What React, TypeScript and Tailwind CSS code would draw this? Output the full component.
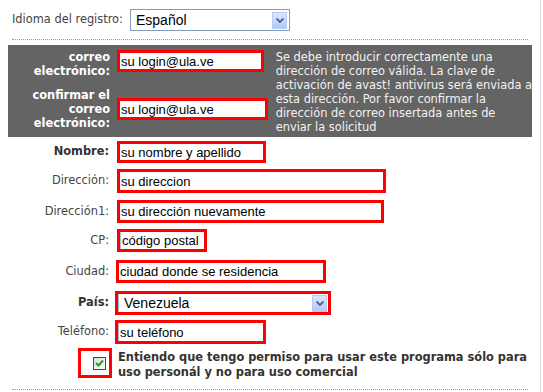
import type { ReactNode } from "react";

// Formulario de registro (captura a 543x392)

function Chevron() {
  return (
    <span className="flex h-[17px] w-[15px] items-center justify-center border border-[#b8cbf5] bg-gradient-to-b from-[#dbe6fd] to-[#b6c9f6]">
      <svg width="8" height="5" viewBox="0 0 8 5" aria-hidden>
        <path d="M0.5 0.5 L4 4 L7.5 0.5" fill="none" stroke="#4d6185" strokeWidth="1.8" />
      </svg>
    </span>
  );
}

function Field({
  text,
  className,
  edge = false,
}: {
  text: string;
  className: string;
  edge?: boolean;
}) {
  return (
    <div className={`flex items-center border-[3px] border-[#ff0000] bg-white ${className}`}>
      {edge && <span className="h-full w-px bg-[#a7bad6]" />}
      <span className="whitespace-nowrap pl-[1px] font-['Liberation_Sans',Arial,sans-serif] text-[13px] leading-none text-black">
        {text}
      </span>
    </div>
  );
}

function Row({
  label,
  bold = false,
  className,
  children,
}: {
  label: string;
  bold?: boolean;
  className: string;
  children: ReactNode;
}) {
  return (
    <div className={`flex items-center ${className}`}>
      <span
        className={`w-[110px] pr-[1px] text-right ${bold ? "font-bold text-[#333]" : "text-[#444]"}`}
      >
        {label}
      </span>
      {children}
    </div>
  );
}

export default function App() {
  return (
    <div className="h-[392px] w-[541px] overflow-hidden border-r border-[#dcdcdc] bg-white font-['DejaVu_Sans',Verdana,sans-serif] text-[11.4px] text-[#444]">
      {/* idioma */}
      <div className="flex items-center pt-[9px]">
        <span className="w-[130px] pl-3">Idioma del registro:</span>
        <div className="flex h-[22px] w-[160px] items-center justify-between border border-[#7f9db9] bg-white pl-[5px] pr-[2px]">
          <span className="font-['Liberation_Sans',Arial,sans-serif] text-[14px] text-black">Español</span>
          <Chevron />
        </div>
      </div>

      <div className="mx-3 mt-2 border-t border-dotted border-[#9a9a9a]" />

      {/* bloque correo */}
      <div className="mx-2 mt-[5px] flex h-[92px] bg-[#646464] pt-[5px] leading-[14px]">
        <div className="w-[269px]">
          <div className="flex h-[28px] items-start">
            <span className="w-[102px] text-right font-bold text-white">
              correo
              <br />
              electrónico:
            </span>
            <Field text="su login@ula.ve" className="ml-[7px] h-[22px] w-[147px]" />
          </div>
          <div className="mt-[10px] flex items-center">
            <span className="w-[102px] text-right font-bold text-white">
              confirmar el
              <br />
              correo
              <br />
              electrónico:
            </span>
            <Field text="su login@ula.ve" className="ml-[7px] h-[22px] w-[151px]" />
          </div>
        </div>
        <p className="whitespace-nowrap text-[#f2f2f2]">
          Se debe introducir correctamente una
          <br />
          dirección de correo válida. La clave de
          <br />
          activación de avast! antivirus será enviada a
          <br />
          esta dirección. Por favor confirmar la
          <br />
          dirección de correo insertada antes de
          <br />
          enviar la solicitud
        </p>
      </div>

      {/* datos personales */}
      <div className="flex flex-col">
        <Row label="Nombre:" bold className="mt-[4px]">
          <Field text="su nombre y apellido" className="ml-[7px] h-[22px] w-[149px]" />
        </Row>
        <Row label="Dirección:" className="mt-[6px]">
          <Field text="su direccion" className="ml-[7px] h-[24px] w-[269px]" />
        </Row>
        <Row label="Dirección1:" className="mt-[7px]">
          <Field text="su dirección nuevamente" className="ml-[7px] h-[23px] w-[267px]" />
        </Row>
        <Row label="CP:" className="mt-[6px]">
          <Field text="código postal" edge className="ml-[7px] h-[23px] w-[90px]" />
        </Row>
        <Row label="Ciudad:" className="mt-[8px]">
          <Field text="ciudad donde se residencia" className="ml-[6px] h-[23px] w-[210px]" />
        </Row>
        <Row label="País:" bold className="mt-[8px]">
          <div className="ml-[5px] flex h-[24px] w-[216px] items-center border-[3px] border-[#ff0000] bg-white">
            <span className="h-full w-px bg-[#a7bad6]" />
            <span className="flex-1 pl-[5px] font-['Liberation_Sans',Arial,sans-serif] text-[14px] text-black">
              Venezuela
            </span>
            <span className="mr-[1px]">
              <Chevron />
            </span>
          </div>
        </Row>
        <Row label="Teléfono:" className="mt-[5px]">
          <Field text="su teléfono" edge className="ml-[5px] h-[24px] w-[151px]" />
        </Row>

        {/* permiso */}
        <div className="mt-[4px] flex items-start">
          <div className="ml-[78px] flex h-[30px] w-[34px] items-center justify-end border-[3px] border-[#ff0000] pr-[3px]">
            <span className="flex h-[13px] w-[13px] items-center justify-center border border-[#1c5180] bg-gradient-to-br from-[#dcdcd7] to-white">
              <svg width="9" height="8" viewBox="0 0 9 8" aria-hidden>
                <path d="M1 4 L3.5 6.5 L8 1.5" fill="none" stroke="#21a121" strokeWidth="2" />
              </svg>
            </span>
          </div>
          <p className="ml-[6px] mt-[2px] whitespace-nowrap font-bold leading-[15px] text-[#333]">
            Entiendo que tengo permiso para usar este programa sólo para
            <br />
            uso personál y no para uso comercial
          </p>
        </div>
        <div className="mx-3 mt-[9px] border-t border-dotted border-[#9a9a9a]" />
      </div>
    </div>
  );
}
